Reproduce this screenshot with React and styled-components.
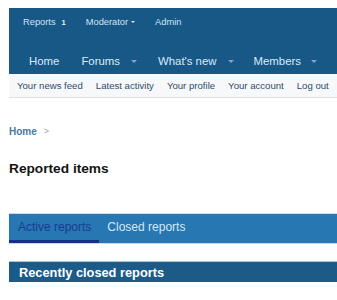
import React from 'react';
import styled, { createGlobalStyle } from 'styled-components';

const Global = createGlobalStyle`
    html, body {
        margin: 0;
        padding: 0;
        background: #fff;
        overflow: hidden;
    }
    body {
        font-family: "Liberation Sans", Arial, sans-serif;
    }
`;

const Page = styled.div`
    padding: 8px 0 0 9px;
`;

const Header = styled.header`
    background: #185886;
`;

const StaffBar = styled.div`
    display: flex;
    align-items: center;
    height: 28px;
    padding-left: 4px;
`;

const StaffLink = styled.span`
    display: flex;
    align-items: center;
    padding: 0 10px;
    font-size: 9.3px;
    color: #cfe2f3;
`;

const Badge = styled.span`
    margin-left: 6px;
    font-size: 7.5px;
    font-weight: bold;
    color: #e6f0f9;
`;

const Caret = styled.span`
    display: inline-block;
    width: 0;
    height: 0;
    margin-left: ${p => p.$gap || 4}px;
    border-left: ${p => p.$size}px solid transparent;
    border-right: ${p => p.$size}px solid transparent;
    border-top: ${p => p.$size}px solid ${p => p.$color};
`;

const NavRow = styled.nav`
    display: flex;
    align-items: center;
    height: 26px;
    margin-top: 12px;
    padding-left: 9px;
`;

const NavTab = styled.span`
    display: flex;
    align-items: center;
    padding: 0 ${p => p.$pad}px;
    font-size: 11.4px;
    color: #d8ebfa;
    white-space: nowrap;
`;

const SubNav = styled.div`
    display: flex;
    align-items: center;
    gap: 13px;
    height: 23px;
    padding-left: 8px;
    background: #f7f8f9;
    border-bottom: 1px solid #dfe2e5;
    overflow: hidden;
`;

const SubLink = styled.span`
    font-size: 9.6px;
    color: #2f4c6c;
    white-space: nowrap;
`;

const Crumbs = styled.div`
    display: flex;
    align-items: center;
    gap: 7px;
    margin-top: 27px;
    height: 12px;
    font-size: 10px;
    font-weight: bold;
    color: #4a78a8;
`;

const Chevron = styled.span`
    font-weight: normal;
    font-size: 9px;
    color: #9aa4ae;
`;

const Title = styled.h1`
    margin: 24px 0 0;
    height: 16px;
    line-height: 16px;
    font-size: 13.7px;
    font-weight: bold;
    color: #141414;
`;

const Tabs = styled.div`
    display: flex;
    align-items: stretch;
    margin-top: 36px;
    height: 29px;
    background: #2677b2;
    border-top: 1px solid #c9dcec;
    border-bottom: 1px solid #c9dcec;
`;

const Tab = styled.span`
    display: flex;
    align-items: center;
    padding: 0 8px 0 ${p => p.$active ? 9 : 8}px;
    font-size: 12px;
    color: ${p => p.$active ? '#1b3b93' : '#d6e8f6'};
    border-bottom: 3px solid ${p => p.$active ? '#182f8a' : 'transparent'};
    white-space: nowrap;
`;

const BlockHeader = styled.h2`
    display: flex;
    align-items: center;
    margin: 17px 0 0;
    height: 20px;
    padding-left: 10px;
    background: #1c5a88;
    border-top: 1px solid #a9c6dd;
    font-size: 12.8px;
    font-weight: bold;
    color: #fff;
`;

export default function App() {
    return (
        <Page>
            <Global />
            <Header>
                <StaffBar>
                    <StaffLink>Reports<Badge>1</Badge></StaffLink>
                    <StaffLink>Moderator<Caret $size={2.5} $gap={3} $color="#e6f0f9" /></StaffLink>
                    <StaffLink>Admin</StaffLink>
                </StaffBar>
                <NavRow>
                    <NavTab $pad={11}>Home</NavTab>
                    <NavTab $pad={11}>Forums<Caret $size={3} $gap={11} $color="#7fa6c6" /></NavTab>
                    <NavTab $pad={10}>What's new<Caret $size={3} $gap={11} $color="#7fa6c6" /></NavTab>
                    <NavTab $pad={10}>Members<Caret $size={3} $gap={10} $color="#7fa6c6" /></NavTab>
                </NavRow>
            </Header>
            <SubNav>
                <SubLink>Your news feed</SubLink>
                <SubLink>Latest activity</SubLink>
                <SubLink>Your profile</SubLink>
                <SubLink>Your account</SubLink>
                <SubLink>Log out</SubLink>
            </SubNav>
            <Crumbs>Home<Chevron>&gt;</Chevron></Crumbs>
            <Title>Reported items</Title>
            <Tabs>
                <Tab $active>Active reports</Tab>
                <Tab>Closed reports</Tab>
            </Tabs>
            <BlockHeader>Recently closed reports</BlockHeader>
        </Page>
    );
}
